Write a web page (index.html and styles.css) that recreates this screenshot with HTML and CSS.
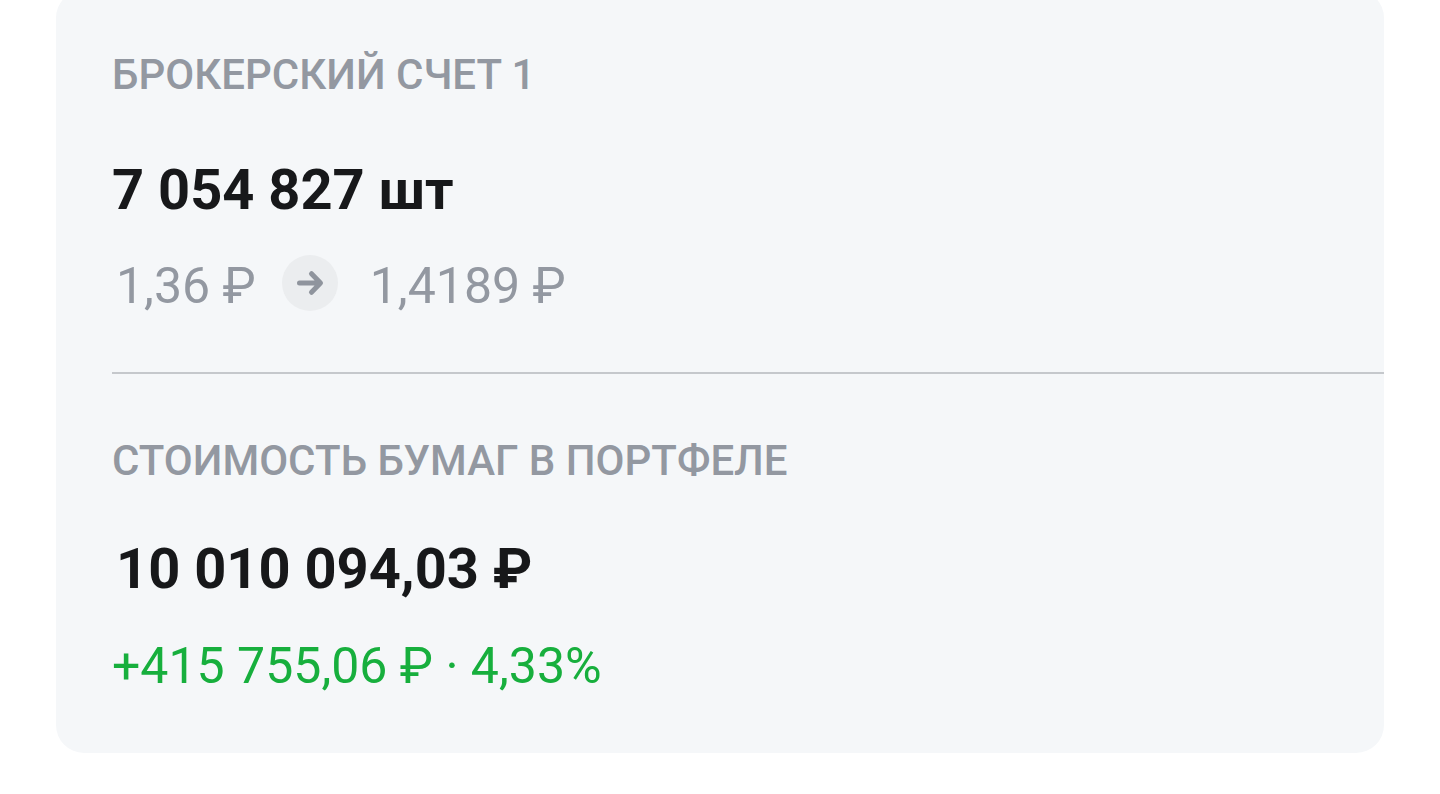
FILE: index.html
```
<!DOCTYPE html>
<html lang="ru">
<head>
    <meta charset="UTF-8">
    <meta name="viewport" content="width=device-width, initial-scale=1.0">
    <title>Брокерский счет</title>
    <link rel="stylesheet" href="styles.css">
</head>
<body>
    <main class="card">
        <!-- Account -->
        <section class="account">
            <h2 class="label">БРОКЕРСКИЙ СЧЕТ 1</h2>
            <p class="amount">7 054 827 шт</p>
            <div class="prices">
                <span>1,36 ₽</span>
                <span class="arrow">
                    <svg viewBox="0 0 56 56" width="56" height="56" aria-hidden="true">
                        <path d="M17.500 28H38M29.500 18.700L38.500 28L29.500 37.300" />
                    </svg>
                </span>
                <span>1,4189 ₽</span>
            </div>
        </section>

        <!-- Portfolio value -->
        <section class="portfolio">
            <h2 class="label">СТОИМОСТЬ БУМАГ В ПОРТФЕЛЕ</h2>
            <p class="amount amount-money">10 010 094,03 ₽</p>
            <p class="profit">+415 755,06 ₽ · 4,33%</p>
        </section>
    </main>
</body>
</html>
```

FILE: styles.css
```
body {
    display: flow-root;
    margin: 0;
    background: #fff;
    font-family: Roboto, "Liberation Sans", sans-serif;
}

/* The card starts a little above the top edge */
.card {
    margin: -10px 56px 0;
    padding: 0 0 56px 56px;
    background: #f5f7f9;
    border-radius: 28px;
}

.label {
    margin: 0;
    font-size: 42px;
    line-height: 48px;
    font-weight: 500;
    color: #9398a1;
}

.amount {
    margin: 0;
    font-size: 56px;
    line-height: 64px;
    font-weight: 700;
    color: #17181a;
}

.amount-money {
    padding-left: 4px;
}

/* Account */
.account {
    padding: 61px 0 55px;
    border-bottom: 2px solid #c5c8cc;
}

.account .amount {
    margin-top: 59px;
}

.prices {
    display: flex;
    align-items: flex-start;
    margin-top: 33px;
    padding-left: 4px;
    font-size: 50px;
    line-height: 62px;
    color: #9398a1;
}

.arrow {
    display: flex;
    margin: 0 32px 0 26px;
    background: #ebedef;
    border-radius: 50%;
}

.arrow path {
    fill: none;
    stroke: #8f949d;
    stroke-width: 5;
    stroke-linecap: round;
    stroke-linejoin: round;
}

/* Portfolio value */
.portfolio {
    padding-top: 63px;
}

.portfolio .amount {
    margin-top: 52px;
}

.profit {
    margin: 34px 0 0;
    font-size: 50px;
    line-height: 62px;
    color: #17af3d;
}
```
